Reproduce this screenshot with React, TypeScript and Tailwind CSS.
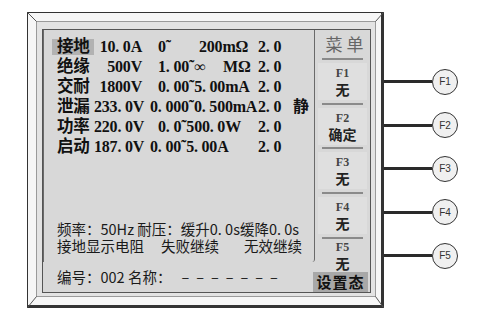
import React from 'react';

const serif = "font-['Liberation_Serif','Noto_Sans_CJK_SC',serif]";
const sans = "font-['Noto_Sans_CJK_SC','Noto_Sans',sans-serif]";

interface Cell {
  t: string;
  cls: string;
}

interface Row {
  name: string;
  value: string;
  hl?: boolean;
  cells: Cell[];
}

// dot followed by a space mimics the half-width dot of the LCD font
const rows: Row[] = [
  {
    name: '接地',
    value: '10. 0A',
    hl: true,
    cells: [
      { t: '0˜', cls: 'ml-[16px] w-[41px]' },
      { t: '200mΩ', cls: 'w-[59px]' },
      { t: '2. 0', cls: 'w-[35px]' },
    ],
  },
  {
    name: '绝缘',
    value: '500V',
    cells: [
      { t: '1. 00˜∞', cls: 'ml-[16px] w-[65px]' },
      { t: 'MΩ', cls: 'w-[35px]' },
      { t: '2. 0', cls: 'w-[35px]' },
    ],
  },
  {
    name: '交耐',
    value: '1800V',
    cells: [
      { t: '0. 00˜5. 00mA', cls: 'ml-[16px] w-[100px]' },
      { t: '2. 0', cls: 'w-[35px]' },
    ],
  },
  {
    name: '泄漏',
    value: '233. 0V',
    cells: [
      { t: '0. 000˜0. 500mA', cls: 'ml-[8px] w-[108px]' },
      { t: '2. 0', cls: 'w-[35px]' },
      { t: '静', cls: 'w-[20px]' },
    ],
  },
  {
    name: '功率',
    value: '220. 0V',
    cells: [
      { t: '0. 0˜500. 0W', cls: 'ml-[16px] w-[100px]' },
      { t: '2. 0', cls: 'w-[35px]' },
    ],
  },
  {
    name: '启动',
    value: '187. 0V',
    cells: [
      { t: '0. 00˜5. 00A', cls: 'ml-[8px] w-[108px]' },
      { t: '2. 0', cls: 'w-[35px]' },
    ],
  },
];

const menu = [
  { key: 'F1', label: '无' },
  { key: 'F2', label: '确定' },
  { key: 'F3', label: '无' },
  { key: 'F4', label: '无' },
  { key: 'F5', label: '无' },
];

const MenuItem: React.FC<{ k: string; label: string; last?: boolean }> = ({ k, label, last }) => (
  <div className={last ? 'flex flex-col' : 'flex h-[45px] flex-col'}>
    <div className="mx-[7px] h-[2px] bg-[#8a8a8a]" />
    <div
      className={
        last
          ? 'mx-[3px] mt-[1px] flex flex-col items-center'
          : 'mx-[3px] mt-[3px] flex h-[37px] flex-col items-center bg-[#dfdfdf] pt-[3px]'
      }
    >
      <span className={`${serif} text-[12px] leading-[14px] font-bold text-[#444]`}>{k}</span>
      <span className={`${sans} text-[14px] leading-[18px] font-bold text-[#222]`}>{label}</span>
    </div>
  </div>
);

export default function App() {
  return (
    <div className="flex min-h-screen bg-white pl-[27px] pt-[12px]">
      {/* device bezel */}
      <div className="relative h-[296px] w-[357px] shrink-0 border-t border-b-[3px] border-l border-r-[3px] border-[#333] bg-[#f6f6f6] pt-[8px] pr-[5px] pb-[8px] pl-[8px]">
        <svg className="pointer-events-none absolute -left-px -top-px" width="357" height="296">
          <line x1="0.5" y1="0.5" x2="9.5" y2="9.5" stroke="#555" />
          <line x1="356.5" y1="0.5" x2="348.5" y2="9.5" stroke="#555" />
          <line x1="0.5" y1="295.5" x2="9.5" y2="284.5" stroke="#555" />
          <line x1="356.5" y1="295.5" x2="348.5" y2="284.5" stroke="#555" />
        </svg>
        <div className="h-full border border-[#9a9a9a] bg-[#e3e3e3] pt-[7px] pr-[4px] pb-[3px] pl-[5px]">
          {/* LCD screen */}
          <div className="flex h-full border border-[#555] bg-[#d8d8d8] text-[#111]">
            {/* left column */}
            <div className="flex w-[272px] shrink-0 flex-col">
              <div className="flex h-[232px] flex-col rounded-br-[3px] border-l border-r border-[#6a6a6a] pt-[7px]">
                {rows.map((r) => (
                  <div key={r.name} className={`${serif} flex h-[20px] items-center pl-[8px] text-[16px] font-bold whitespace-pre tracking-[-0.2px]`}>
                    <span className={r.hl ? 'flex h-[16px] w-[42px] shrink-0 items-center bg-[#b2b2b2] pl-[5px] text-[16.5px]' : 'flex h-[16px] w-[42px] shrink-0 items-center pl-[5px] text-[16.5px]'}>
                      {r.name}
                    </span>
                    <span className="w-[48px] shrink-0 text-right">{r.value}</span>
                    {r.cells.map((c, i) => (
                      <span key={i} className={`${c.cls} shrink-0`}>
                        {c.t}
                      </span>
                    ))}
                  </div>
                ))}
                <div className={`${sans} mt-auto pb-[8px] pl-[13px] text-[14.5px] whitespace-pre text-[#1a1a1a]`}>
                  <div className="flex h-[17px] items-center">频率：50Hz 耐压：缓升0. 0s缓降0. 0s</div>
                  <div className="flex h-[17px] items-center">
                    <span>接地显示电阻</span>
                    <span className="ml-[17px]">失败继续</span>
                    <span className="ml-[25px]">无效继续</span>
                  </div>
                </div>
              </div>
              <div className={`${sans} flex flex-1 items-center pl-[14px] text-[14.5px] whitespace-pre text-[#1a1a1a]`}>
                <span>编号：002 名称：</span>
                <span className="ml-[10px] tracking-[7px]">–––––––</span>
              </div>
            </div>
            {/* right menu column */}
            <div className="flex flex-1 flex-col">
              <div className={`${sans} flex h-[28px] items-center justify-center pl-[8px] text-[17px] tracking-[4px] text-[#666]`}>
                菜单
              </div>
              {menu.map((m, i) => (
                <MenuItem key={m.key} k={m.key} label={m.label} last={i === menu.length - 1} />
              ))}
              <div className={`${sans} mt-auto -ml-[2px] mr-[2px] flex h-[20px] items-center justify-center bg-[#a8a8a8] text-[15px] font-bold tracking-[1px] text-[#111]`}>
                设置态
              </div>
            </div>
          </div>
        </div>
      </div>
      {/* function key connectors */}
      <div className="flex flex-col pt-[48px]">
        {menu.map((m) => (
          <div key={m.key} className="flex h-[43.5px] items-center">
            <div className="h-[3px] w-[48px] bg-[#2a2a2a]" />
            <div className="flex h-[26px] w-[26px] items-center justify-center rounded-full border-[1.5px] border-[#333] bg-[#f0f0f0] font-['Liberation_Sans',sans-serif] text-[10px] text-[#333]">
              {m.key}
            </div>
          </div>
        ))}
      </div>
    </div>
  );
}
